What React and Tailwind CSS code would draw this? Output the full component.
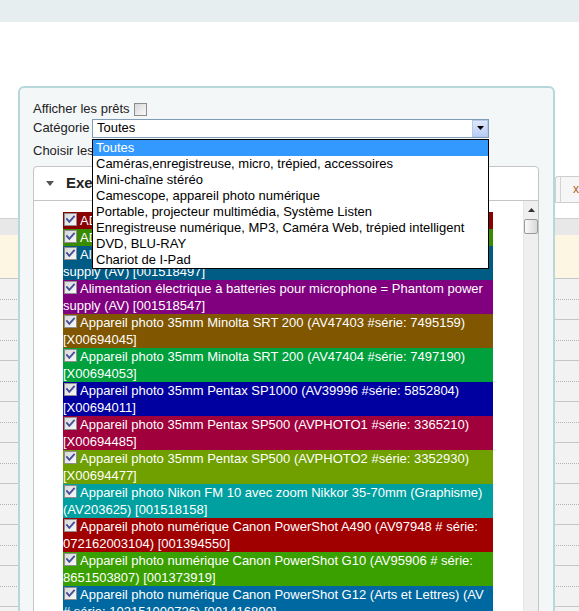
import React from 'react';

const items = [
  { c: 'bg-[#8b0000]', lines: ['ADAPTATEUR XLR femelle / mini-jack (AV) [001518489]'] },
  { c: 'bg-[#3b8b00]', lines: ['ADAPTATEUR XLR mâle / mini-jack (AV) [001518505]'] },
  { c: 'bg-[#005b85]', lines: ['Alimentation électrique à batteries pour microphone = Phantom power', 'supply (AV) [001518497]'] },
  { c: 'bg-[#800080]', lines: ['Alimentation électrique à batteries pour microphone = Phantom power', 'supply (AV) [001518547]'] },
  { c: 'bg-[#805600]', lines: ['Appareil photo 35mm Minolta SRT 200 (AV47403 #série: 7495159)', '[X00694045]'] },
  { c: 'bg-[#00a03c]', lines: ['Appareil photo 35mm Minolta SRT 200 (AV47404 #série: 7497190)', '[X00694053]'] },
  { c: 'bg-[#0000a0]', lines: ['Appareil photo 35mm Pentax SP1000 (AV39996 #série: 5852804)', '[X00694011]'] },
  { c: 'bg-[#a0003c]', lines: ['Appareil photo 35mm Pentax SP500 (AVPHOTO1 #série: 3365210)', '[X00694485]'] },
  { c: 'bg-[#70a000]', lines: ['Appareil photo 35mm Pentax SP500 (AVPHOTO2 #série: 3352930)', '[X00694477]'] },
  { c: 'bg-[#00a0a0]', lines: ['Appareil photo Nikon FM 10 avec zoom Nikkor 35-70mm (Graphisme)', '(AV203625) [001518158]'] },
  { c: 'bg-[#a00000]', lines: ['Appareil photo numérique Canon PowerShot A490 (AV97948 # série:', '072162003104) [001394550]'] },
  { c: 'bg-[#3aa000]', lines: ['Appareil photo numérique Canon PowerShot G10 (AV95906 # série:', '8651503807) [001373919]'] },
  { c: 'bg-[#0068a0]', lines: ['Appareil photo numérique Canon PowerShot G12 (Arts et Lettres) (AV', '# série: 102151000726) [001416890]'] },
  { c: 'bg-[#800080]', lines: ['Appareil photo numérique Canon PowerShot SX110 (AV # série:', '1234567890) [001416891]'] },
];

const options = [
  'Toutes',
  'Caméras,enregistreuse, micro, trépied, accessoires',
  'Mini-chaîne stéréo',
  'Camescope, appareil photo numérique',
  'Portable, projecteur multimédia, Système Listen',
  'Enregistreuse numérique, MP3, Caméra Web, trépied intelligent',
  'DVD, BLU-RAY',
  'Chariot de I-Pad',
];

function Box({ checked, id }) {
  return (
    <svg width="13" height="13" viewBox="0 0 13 13" className="shrink-0 block">
      <defs>
        <linearGradient id={id} x1="0" y1="0" x2="1" y2="1">
          <stop offset="0" stopColor="#d6d6d6" />
          <stop offset="1" stopColor="#fbfbfb" />
        </linearGradient>
      </defs>
      <rect x="0.5" y="0.5" width="12" height="12" fill={`url(#${id})`} stroke="#8d8d8d" />
      {checked && (
        <path d="M3 6.2 L5.3 8.8 L10 3.6" fill="none" stroke="#44509a" strokeWidth="1.9" strokeLinecap="square" />
      )}
    </svg>
  );
}

function BgRow() {
  return (
    <div className="h-[41px] bg-[#f2f2f2]">
      <div className="h-[21px] border-b border-dotted border-[#b3b3b3]" />
      <div className="h-[20px] border-b border-[#c6c6c6]" />
    </div>
  );
}

export default function App() {
  return (
    <div className="relative w-[579px] h-[611px] overflow-hidden bg-white font-['Liberation_Sans',Arial,sans-serif] text-[13px] text-[#222]">
      {/* background page */}
      <div className="h-[22px] bg-[#e6eef0]" />
      <div className="h-[154px]" />
      <div className="h-[27px] flex justify-end">
        <div className="w-[24px] border border-r-0 border-[#cfcfcf] rounded-tl-[3px] bg-[#f6f6f6] flex">
          <div className="w-[8px] border-r border-[#d3d3d3]" />
          <span className="ml-[12px] mt-[3px] text-[12px] text-[#b0601a]">x</span>
        </div>
      </div>
      <div className="h-[15px]" />
      <div className="h-[17px] bg-[#e8e8e8] border-t border-[#d0d0d0]" />
      <div className="h-[44px] bg-[#fdf6e3] border-b border-[#c6c6c6]" />
      {Array.from({ length: 9 }).map((_, i) => (
        <BgRow key={i} />
      ))}

      {/* dialog */}
      <div className="absolute left-[18px] top-[86px] w-[537px] h-[560px] rounded-[6px] border-2 border-[#b7d7da] bg-[#f3f7f8] pl-[13px] pr-[14px] pt-[12px]">
        <div className="flex items-center h-[18px]">
          <span>Afficher les prêts</span>
          <span className="ml-[4px]">
            <Box id="g0" />
          </span>
        </div>
        <div className="relative z-10 flex items-center h-[20px]">
          <span className="w-[59px]">Catégorie</span>
          <div className="relative w-[397px] h-[19px] border border-[#7f9db9] bg-white flex items-center">
            <span className="pl-[4px] text-black">Toutes</span>
            <div className="absolute right-0 top-0 bottom-0 w-[16px] border border-[#b5c8ee] bg-gradient-to-b from-[#dfe8fb] to-[#b9cdf6] flex items-center justify-center">
              <svg width="7" height="4" viewBox="0 0 7 4">
                <path d="M0 0 L7 0 L3.5 4 Z" fill="#000" />
              </svg>
            </div>
            <div className="absolute left-[-1px] top-[19px] w-[397px] border border-black bg-white">
              {options.map((o, i) => (
                <div
                  key={o}
                  className={
                    i === 0
                      ? 'h-[16px] leading-[16px] pl-[3px] bg-[#3399ff] text-white whitespace-nowrap'
                      : 'h-[16px] leading-[16px] pl-[3px] text-black whitespace-nowrap'
                  }
                >
                  {o}
                </div>
              ))}
            </div>
          </div>
        </div>
        <div className="mt-[3px] h-[19px] flex items-center">Choisir les exemplaires</div>

        <div className="mt-[6px] h-[460px] border border-[#c5c5c5] rounded-t-[4px] bg-white flex flex-col">
          <div className="h-[34px] shrink-0 border-b border-[#c5c5c5] flex items-center pl-[12px]">
            <svg width="8" height="5" viewBox="0 0 8 5">
              <path d="M0 0 L8 0 L4 5 Z" fill="#555" />
            </svg>
            <span className="ml-[12px] font-bold text-[15px] text-[#222]">Exemplaires</span>
          </div>
          <div className="flex flex-1 min-h-0">
            <div className="flex-1 pl-[29px] pt-[11px] overflow-hidden">
              <div className="w-[430px]">
                {items.map((it, i) => (
                  <div key={i} className={`${it.c} text-white leading-[17px]`}>
                    <div className="flex items-start h-[17px] whitespace-nowrap">
                      <span className="ml-[1px] mt-[1px]">
                        <Box checked id={`g${i + 1}`} />
                      </span>
                      <span className="ml-[3px]">{it.lines[0]}</span>
                    </div>
                    {it.lines.slice(1).map((l) => (
                      <div key={l} className="h-[17px] whitespace-nowrap">
                        {l}
                      </div>
                    ))}
                  </div>
                ))}
              </div>
            </div>
            <div className="w-[15px] bg-[#efefef] border-l border-[#e6e6e6] flex flex-col items-center">
              <div className="h-[17px] flex items-center justify-center">
                <svg width="7" height="4" viewBox="0 0 7 4">
                  <path d="M0 4 L7 4 L3.5 0 Z" fill="#333" />
                </svg>
              </div>
              <div className="w-[14px] h-[15px] mt-[1px] rounded-[2px] border border-[#9a9a9a] bg-gradient-to-r from-[#fafafa] to-[#d8d8d8]" />
            </div>
          </div>
        </div>
      </div>
    </div>
  );
}
